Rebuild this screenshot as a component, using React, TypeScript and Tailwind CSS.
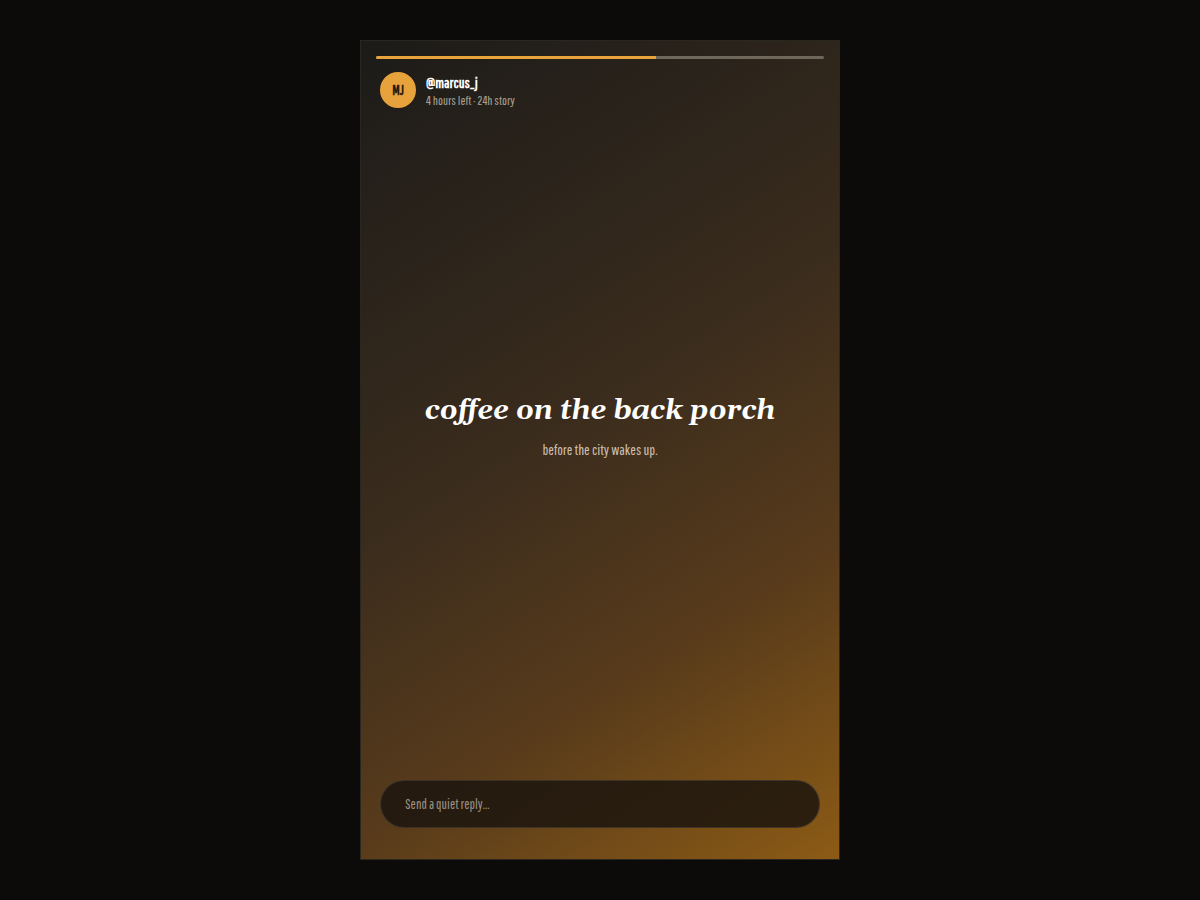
const progress = 62.5

export default function App() {
  return (
    <div className="min-h-screen w-full bg-[#0c0b0a] flex items-center justify-center font-['Pathway_Gothic_One','Liberation_Sans_Narrow',sans-serif]">
      <div className="w-[480px] h-[820px] flex flex-col border border-[#2a2620] bg-[linear-gradient(148deg,#1c1b19_0%,#3a2c1d_45%,#583b1b_72%,#8c5b15_100%)]">
        {/* progress */}
        <div className="px-[15px] pt-[15px]">
          <div className="h-[3px] w-full bg-[#6f6759] rounded-full overflow-hidden">
            <div className="h-full bg-[#e9a33b]" style={{ width: `${progress}%` }} />
          </div>
        </div>

        {/* header */}
        <div className="flex items-center gap-2.5 px-[19px] pt-[13px]">
          <div className="w-9 h-9 rounded-full bg-[#e8a23c] flex items-center justify-center text-[14px] font-bold text-[#2a1d0c]">
            MJ
          </div>
          <div className="flex flex-col leading-none pt-[2px]">
            <span className="text-[15px] font-bold text-white">@marcus_j</span>
            <span className="text-[13px] text-[#a9a093] mt-[4px]">4 hours left · 24h story</span>
          </div>
        </div>

        {/* body */}
        <div className="flex-1 flex flex-col items-center justify-center text-center pb-[32px]">
          <h1 className="font-['Gelasio','Liberation_Serif',serif] italic font-bold text-[28px] leading-tight text-white">
            coffee on the back porch
          </h1>
          <p className="mt-[10px] text-[15px] text-[#cdbfae]">before the city wakes up.</p>
        </div>

        {/* reply */}
        <div className="px-[19px] pb-[31px]">
          <div className="h-12 rounded-full bg-[#1c150e]/85 border border-white/10 flex items-center px-6">
            <span className="text-[14px] text-[#9c9284]">Send a quiet reply...</span>
          </div>
        </div>
      </div>
    </div>
  )
}
